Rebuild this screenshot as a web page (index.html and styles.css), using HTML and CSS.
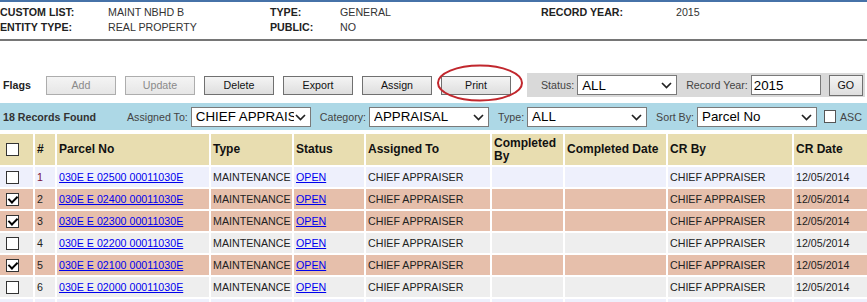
FILE: index.html
```html
<!DOCTYPE html>
<html lang="en">
<head>
    <meta charset="UTF-8">
    <title>Custom List</title>
    <link rel="stylesheet" href="styles.css">
</head>
<body>
    <div class="info">
        <div class="info-row">
            <span class="lbl w1">CUSTOM LIST:</span><span class="val w2">MAINT NBHD B</span>
            <span class="lbl w3">TYPE:</span><span class="val w4">GENERAL</span>
            <span class="lbl w5">RECORD YEAR:</span><span class="val">2015</span>
        </div>
        <div class="info-row">
            <span class="lbl w1">ENTITY TYPE:</span><span class="val w2">REAL PROPERTY</span>
            <span class="lbl w3">PUBLIC:</span><span class="val w4">NO</span>
        </div>
    </div>

    <!-- Toolbar -->
    <div class="toolbar">
        <span class="flags">Flags</span>
        <button class="btn" disabled>Add</button>
        <button class="btn" disabled>Update</button>
        <button class="btn">Delete</button>
        <button class="btn">Export</button>
        <button class="btn">Assign</button>
        <span class="ring-wrap">
            <button class="btn">Print</button>
            <svg class="ring" width="94" height="42" viewBox="0 0 94 42">
                <ellipse cx="46" cy="20" rx="42" ry="17.5" fill="none" stroke="#c1272d" stroke-width="2"/>
            </svg>
        </span>
        <div class="panel">
            <span class="flbl">Status:</span>
            <span class="sel s-status">
                <select><option>ALL</option></select>
                <svg class="chev" width="11" height="7" viewBox="0 0 11 7"><path d="M1 1 L5.5 5.5 L10 1" fill="none" stroke="#222" stroke-width="1.7"/></svg>
            </span>
            <span class="flbl gap">Record Year:</span>
            <input class="year" type="text" value="2015">
            <button class="btn go">GO</button>
        </div>
    </div>

    <!-- Filter bar -->
    <div class="filters">
        <span class="count">18 Records Found</span>
        <span class="flbl">Assigned To:</span>
        <span class="sel">
            <select><option>CHIEF APPRAISER</option></select>
            <svg class="chev" width="11" height="7" viewBox="0 0 11 7"><path d="M1 1 L5.5 5.5 L10 1" fill="none" stroke="#222" stroke-width="1.7"/></svg>
        </span>
        <span class="flbl gap">Category:</span>
        <span class="sel">
            <select><option>APPRAISAL</option></select>
            <svg class="chev" width="11" height="7" viewBox="0 0 11 7"><path d="M1 1 L5.5 5.5 L10 1" fill="none" stroke="#222" stroke-width="1.7"/></svg>
        </span>
        <span class="flbl gap">Type:</span>
        <span class="sel">
            <select><option>ALL</option></select>
            <svg class="chev" width="11" height="7" viewBox="0 0 11 7"><path d="M1 1 L5.5 5.5 L10 1" fill="none" stroke="#222" stroke-width="1.7"/></svg>
        </span>
        <span class="flbl gap">Sort By:</span>
        <span class="sel">
            <select><option>Parcel No</option></select>
            <svg class="chev" width="11" height="7" viewBox="0 0 11 7"><path d="M1 1 L5.5 5.5 L10 1" fill="none" stroke="#222" stroke-width="1.7"/></svg>
        </span>
        <input class="cb asc" type="checkbox">
        <span class="flbl">ASC</span>
    </div>

    <!-- Results -->
    <table class="grid">
        <colgroup>
            <col style="width:35px"><col style="width:22px"><col style="width:154px">
            <col style="width:83px"><col style="width:72px"><col style="width:126px">
            <col style="width:73px"><col style="width:103px"><col style="width:126px">
            <col style="width:100px">
        </colgroup>
        <tr class="head">
            <th><input class="cb" type="checkbox"></th>
            <th>#</th>
            <th>Parcel No</th>
            <th>Type</th>
            <th>Status</th>
            <th>Assigned To</th>
            <th>Completed By</th>
            <th>Completed Date</th>
            <th>CR By</th>
            <th>CR Date</th>
        </tr>
        <tr class="odd">
            <td><input class="cb" type="checkbox"></td>
            <td class="visited">1</td>
            <td><a href="#">030E E 02500 00011030E</a></td>
            <td>MAINTENANCE</td>
            <td><a href="#">OPEN</a></td>
            <td>CHIEF APPRAISER</td>
            <td></td><td></td>
            <td>CHIEF APPRAISER</td>
            <td>12/05/2014</td>
        </tr>
        <tr class="even sel-row">
            <td><input class="cb" type="checkbox" checked></td>
            <td>2</td>
            <td><a href="#">030E E 02400 00011030E</a></td>
            <td>MAINTENANCE</td>
            <td><a href="#">OPEN</a></td>
            <td>CHIEF APPRAISER</td>
            <td></td><td></td>
            <td>CHIEF APPRAISER</td>
            <td>12/05/2014</td>
        </tr>
        <tr class="odd sel-row">
            <td><input class="cb" type="checkbox" checked></td>
            <td>3</td>
            <td><a href="#">030E E 02300 00011030E</a></td>
            <td>MAINTENANCE</td>
            <td><a href="#">OPEN</a></td>
            <td>CHIEF APPRAISER</td>
            <td></td><td></td>
            <td>CHIEF APPRAISER</td>
            <td>12/05/2014</td>
        </tr>
        <tr class="even">
            <td><input class="cb" type="checkbox"></td>
            <td>4</td>
            <td><a href="#">030E E 02200 00011030E</a></td>
            <td>MAINTENANCE</td>
            <td><a href="#">OPEN</a></td>
            <td>CHIEF APPRAISER</td>
            <td></td><td></td>
            <td>CHIEF APPRAISER</td>
            <td>12/05/2014</td>
        </tr>
        <tr class="odd sel-row">
            <td><input class="cb" type="checkbox" checked></td>
            <td>5</td>
            <td><a href="#">030E E 02100 00011030E</a></td>
            <td>MAINTENANCE</td>
            <td><a href="#">OPEN</a></td>
            <td>CHIEF APPRAISER</td>
            <td></td><td></td>
            <td>CHIEF APPRAISER</td>
            <td>12/05/2014</td>
        </tr>
        <tr class="even">
            <td><input class="cb" type="checkbox"></td>
            <td>6</td>
            <td><a href="#">030E E 02000 00011030E</a></td>
            <td>MAINTENANCE</td>
            <td><a href="#">OPEN</a></td>
            <td>CHIEF APPRAISER</td>
            <td></td><td></td>
            <td>CHIEF APPRAISER</td>
            <td>12/05/2014</td>
        </tr>
        <!-- next row only peeks in at the bottom edge -->
        <tr class="odd">
            <td></td><td></td><td></td><td></td><td></td>
            <td></td><td></td><td></td><td></td><td></td>
        </tr>
    </table>
</body>
</html>
```

FILE: styles.css
```css
/* Page */
html, body {
    margin: 0;
    overflow: hidden;
}

body {
    font-family: "Liberation Sans", Arial, sans-serif;
    font-size: 8pt;
    color: #222;
    background-color: #fff;
    width: 867px;
    height: 302px;
}

* {
    box-sizing: border-box;
}

/* Header info */
.info {
    border-top: 2px solid #4672a8;
    border-bottom: 2px solid #767676;
    padding: 3px 0 4px 0;
}

.info-row {
    display: flex;
    line-height: 15px;
}

.lbl {
    font-weight: bold;
    color: #222;
}

.val {
    color: #333;
}

.w1 { width: 108px; }
.w2 { width: 162px; }
.w3 { width: 70px; }
.w4 { width: 201px; }
.w5 { width: 135px; }

/* Toolbar */
.toolbar {
    display: flex;
    align-items: center;
    margin-top: 32px;
    height: 24px;
}

.flags {
    width: 46px;
    padding-left: 3px;
    font-weight: bold;
}

.btn {
    font-family: "Liberation Sans", Arial, sans-serif;
    font-size: 8pt;
    color: #111;
    width: 70px;
    height: 19px;
    margin: 0 9px 0 0;
    padding: 0;
    border: 1px solid #707070;
    border-radius: 0;
    background: linear-gradient(#f4f4f4, #dedede);
}

.btn:disabled {
    color: #8a8a8a;
    border-color: #adadad;
    background: linear-gradient(#f4f4f4, #e6e6e6);
}

.ring-wrap {
    position: relative;
    display: inline-flex;
}

.ring {
    position: absolute;
    left: -7px;
    top: -13px;
    pointer-events: none;
}

.panel {
    display: flex;
    align-items: center;
    margin-left: 7px;
    width: 338px;
    height: 24px;
    padding-left: 14px;
    background-color: #d9d9d9;
}

.flbl {
    color: #444;
    margin-right: 3px;
}

.gap {
    margin-left: 9px;
}

.year {
    width: 70px;
    height: 20px;
    margin: 0;
    padding: 0 2px;
    border: 1px solid #7a7a7a;
    font-family: "Liberation Sans", Arial, sans-serif;
    font-size: 13.33px;
    color: #000;
}

.btn.go {
    width: 34px;
    height: 21px;
    margin: 0 0 0 8px;
}

/* Select boxes */
.sel {
    position: relative;
    display: inline-flex;
}

.sel select {
    appearance: none;
    -webkit-appearance: none;
    width: 120px;
    height: 20px;
    margin: 0;
    padding: 0 16px 0 4px;
    border: 1px solid #7a7a7a;
    border-radius: 0;
    background-color: #fff;
    font-family: "Liberation Sans", Arial, sans-serif;
    font-size: 13.33px;
    color: #000;
}

.s-status select {
    width: 100px;
}

.chev {
    position: absolute;
    right: 5px;
    top: 7px;
    pointer-events: none;
}

/* Filter bar */
.filters {
    display: flex;
    align-items: center;
    margin-top: 6px;
    height: 27px;
    padding-left: 3px;
    background-color: #add8e6;
}

.count {
    width: 124px;
    font-weight: bold;
    color: #333;
}

/* Checkboxes */
.cb {
    appearance: none;
    -webkit-appearance: none;
    position: relative;
    width: 13px;
    height: 13px;
    margin: 0 0 0 4px;
    border: 1px solid #333;
    background-color: #fff;
    vertical-align: middle;
}

.cb:checked::after {
    content: "";
    position: absolute;
    left: 3px;
    top: 0px;
    width: 4px;
    height: 7px;
    border-right: 2px solid #000;
    border-bottom: 2px solid #000;
    transform: rotate(45deg);
}

.cb.asc {
    width: 12px;
    height: 13px;
    margin: 0 4px 0 7px;
    border-color: #555;
}

/* Results table */
.grid {
    margin-top: 4px;
    width: 894px;
    table-layout: fixed;
    border-collapse: separate;
    border-spacing: 0;
}

.grid th, .grid td {
    border-right: 2px solid #fff;
    border-bottom: 2px solid #fff;
    padding: 0 2px;
    text-align: left;
    vertical-align: middle;
    overflow: hidden;
    white-space: nowrap;
}

.grid th {
    background-color: #e8ddb0;
    font-size: 12px;
    font-weight: bold;
    line-height: 13px;
    color: #111;
    white-space: normal;
}

.head {
    height: 33px;
}

.grid tr.odd, .grid tr.even {
    height: 22px;
}

.odd td {
    background-color: #eef0fc;
}

.even td {
    background-color: #eeeeee;
}

.sel-row td {
    background-color: #e6bfab;
}

.grid a {
    color: #0000ee;
}

.visited {
    color: #7a1040;
}
```
